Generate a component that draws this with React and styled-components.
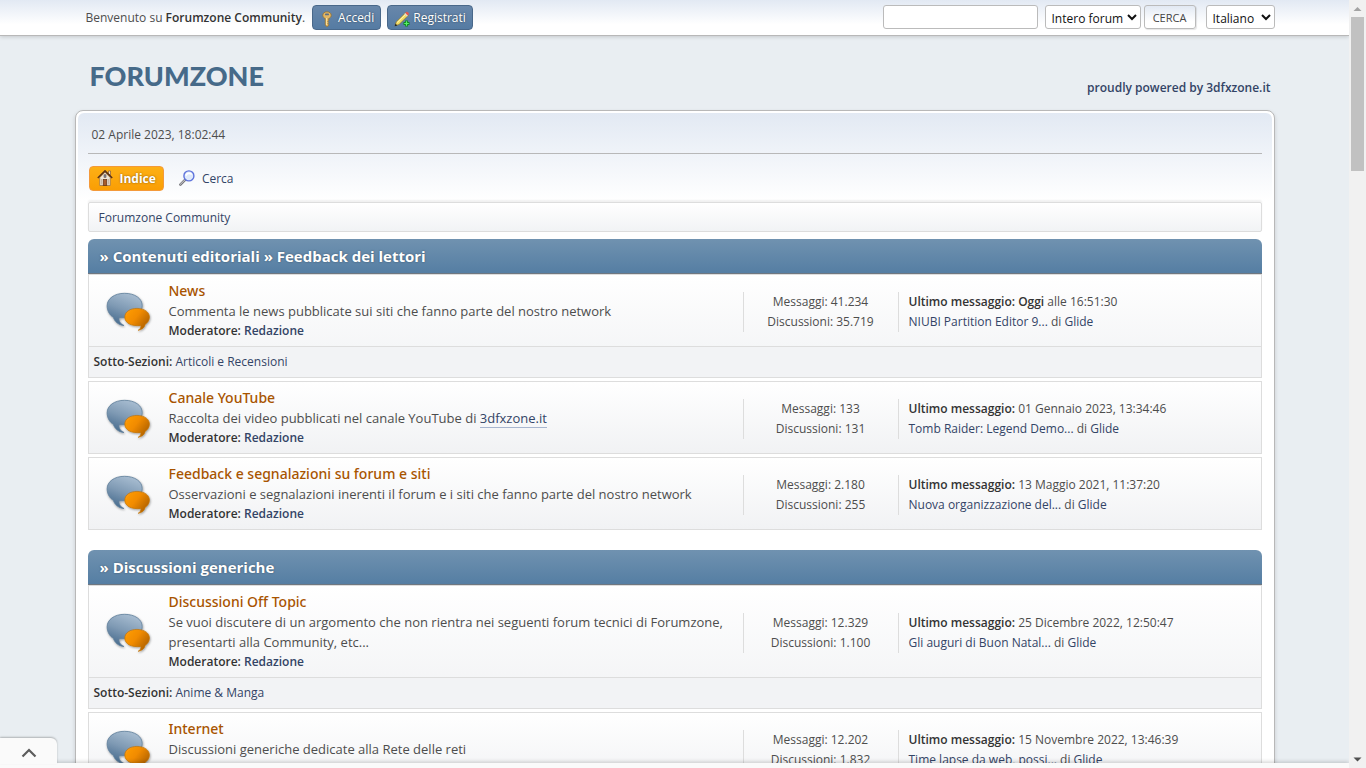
import React, { useState } from "react";
import styled, { createGlobalStyle, css } from "styled-components";

const categories = [
  {
    id: 1,
    title: "» Contenuti editoriali » Feedback dei lettori",
    boards: [
      {
        name: "News",
        text: "Commenta le news pubblicate sui siti che fanno parte del nostro network",
        posts: "41.234",
        topics: "35.719",
        today: true,
        date: "alle 16:51:30",
        last: "NIUBI Partition Editor 9...",
        child: "Articoli e Recensioni",
      },
      {
        name: "Canale YouTube",
        text: "Raccolta dei video pubblicati nel canale YouTube di ",
        site: "3dfxzone.it",
        posts: "133",
        topics: "131",
        date: "01 Gennaio 2023, 13:34:46",
        last: "Tomb Raider: Legend Demo...",
      },
      {
        name: "Feedback e segnalazioni su forum e siti",
        text: "Osservazioni e segnalazioni inerenti il forum e i siti che fanno parte del nostro network",
        posts: "2.180",
        topics: "255",
        date: "13 Maggio 2021, 11:37:20",
        last: "Nuova organizzazione del...",
      },
    ],
  },
  {
    id: 2,
    title: "» Discussioni generiche",
    boards: [
      {
        name: "Discussioni Off Topic",
        text: "Se vuoi discutere di un argomento che non rientra nei seguenti forum tecnici di Forumzone, presentarti alla Community, etc...",
        posts: "12.329",
        topics: "1.100",
        date: "25 Dicembre 2022, 12:50:47",
        last: "Gli auguri di Buon Natal...",
        child: "Anime & Manga",
      },
      {
        name: "Internet",
        text: "Discussioni generiche dedicate alla Rete delle reti",
        posts: "12.202",
        topics: "1.832",
        date: "15 Novembre 2022, 13:46:39",
        last: "Time lapse da web, possi...",
      },
    ],
  },
];

const KeyIcon = () => (
  <svg width="16" height="16" viewBox="0 0 16 16">
    <path
      d="M8 .8C5.500.8 3.800 2.200 3.800 4.300c0 1.500 1 2.700 2.500 3.200v6.600L8 15.700l1.700-1.400v-1.200L8.900 12.300l.9-.9-.9-1 .8-.9v-2C11.200 7 12.200 5.800 12.200 4.300 12.200 2.200 10.500.8 8 .8Z"
      fill="#e2b765"
      stroke="#94702f"
      strokeWidth="0.800"
    />
    <rect x="6" y="2.500" width="4" height="1.800" rx="0.900" fill="#5b6f86" />
    <path d="M7.400 7v7" stroke="#fbe6a8" strokeWidth="0.900" />
  </svg>
);

const PencilIcon = () => (
  <svg width="16" height="16" viewBox="0 0 16 16">
    <path d="M1 14.800 2.200 11 11.500 1.800l2.700 2.700L5 13.500Z" fill="#f4dd62" stroke="#8a7430" strokeWidth="0.700" />
    <path d="M3.200 11.600 12 2.900" stroke="#fff7b8" strokeWidth="1" />
    <path d="m11 2.300 1.500-1.500c.8-.5 2.500 1 2.500 2.300L13.500 4.800Z" fill="#e2574f" />
    <path d="m10.300 3 .9-.9 2.600 2.600-.9.9Z" fill="#ddd" />
    <path d="m.7 15.200.8-2.600 1.800 1.800Z" fill="#222" />
    <path d="M12.500 9.500v6M9.500 12.500h6" stroke="#0f8a20" strokeWidth="2.800" />
    <path d="M12.500 10.200v4.600M10.200 12.500h4.600" stroke="#5cf06a" strokeWidth="1.200" />
  </svg>
);

const HomeIcon = () => (
  <svg width="16" height="16" viewBox="0 0 16 16">
    <path d="M11.500 1h2v4.500l-2-2Z" fill="#efe3d0" stroke="#7a4a25" strokeWidth="0.600" />
    <path d="M2.800 7.500 8 2.200l5.200 5.300v8H2.800Z" fill="#efe6da" stroke="#8b6a4c" strokeWidth="0.700" />
    <path d="M.8 8 8 .9 15.200 8" fill="none" stroke="#5a3219" strokeWidth="1.600" />
    <rect x="6.200" y="9.500" width="3.600" height="6" fill="#a65b2c" stroke="#5f2f12" strokeWidth="0.700" />
    <rect x="7" y="4.800" width="2" height="2.500" fill="#7b8ea8" stroke="#5a3219" strokeWidth="0.500" />
    <path d="M4.500 9v5.500M11.500 9v5.500" stroke="#c9b8a6" strokeWidth="1" />
  </svg>
);

const SearchIcon = () => (
  <svg width="16" height="16" viewBox="0 0 16 16">
    <path d="M6.300 9.700 1.400 14.600" stroke="#77777c" strokeWidth="2.600" strokeLinecap="round" />
    <path d="M6 9.800 1.400 14.300" stroke="#cfcfd4" strokeWidth="1" strokeLinecap="round" />
    <circle cx="9.900" cy="5.900" r="5" fill="#dfeafb" stroke="#5f74dc" strokeWidth="1.400" />
    <path d="M6.800 5.600c1-2.500 4.500-3 6-1" fill="none" stroke="#fff" strokeWidth="1.600" />
  </svg>
);

const BoardIcon = () => (
  <svg width="50" height="44" viewBox="0 0 50 44">
    <defs>
      <linearGradient id="blueBubble" x1="0.700" y1="0" x2="0.300" y2="1">
        <stop offset="0" stopColor="#a9bed2" />
        <stop offset="0.500" stopColor="#7f9ab4" />
        <stop offset="1" stopColor="#456a8d" />
      </linearGradient>
      <linearGradient id="orangeBubble" x1="0" y1="0.100" x2="1" y2="0.800">
        <stop offset="0" stopColor="#ff9d0a" />
        <stop offset="0.450" stopColor="#f18b00" />
        <stop offset="1" stopColor="#a85c00" />
      </linearGradient>
      <filter id="bubbleShadow" x="-20%" y="-20%" width="140%" height="150%">
        <feDropShadow dx="0.600" dy="1" stdDeviation="0.900" floodOpacity="0.400" />
      </filter>
    </defs>
    <g filter="url(#bubbleShadow)">
      <path
        d="M20.500 3.300C31 3.300 38.200 8.500 38.200 15.500 38.200 23 31 28 15 27.800c-.5 3.200 1.500 6.200 5 7.700C14.500 35.200 10.500 31.500 9.300 27.300 5.300 25 3.100 20.500 3.100 15.800 3.100 8.500 10.500 3.300 20.500 3.300Z"
        fill="url(#blueBubble)"
        stroke="#607f9b"
        strokeWidth="0.800"
      />
      <path
        d="M33 18.400c7.200 0 12.400 3.500 12.400 8.600 0 3.300-1.700 5.700-4.200 7.200-.6 3-3 5.500-7 6.100 2.100-1.300 3-2.800 2.700-4.800C27 36.500 20.800 33 20.800 27c0-5.100 5-8.600 12.200-8.600Z"
        fill="url(#orangeBubble)"
        stroke="#c27208"
        strokeWidth="0.700"
      />
    </g>
  </svg>
);

const Board = ({ board }) => (
  <BoardBox>
    <BoardRow>
      <IconCell>
        <BoardIcon />
      </IconCell>
      <Info>
        <BoardName href="#">{board.name}</BoardName>
        <Description>
          {board.text}
          {board.site && <SiteLink href="#">{board.site}</SiteLink>}
        </Description>
        <Moderators>
          Moderatore: <Link href="#">Redazione</Link>
        </Moderators>
      </Info>
      <Stats>
        <p>Messaggi: {board.posts}</p>
        <p>Discussioni: {board.topics}</p>
      </Stats>
      <LastPost>
        <p>
          <strong>Ultimo messaggio: {board.today && "Oggi"}</strong>{" "}
          {board.date}
        </p>
        <p>
          <Link href="#">{board.last}</Link> di <Link href="#">Glide</Link>
        </p>
      </LastPost>
    </BoardRow>
    {board.child && (
      <Children>
        <strong>Sotto-Sezioni:</strong> <Link href="#">{board.child}</Link>
      </Children>
    )}
  </BoardBox>
);

const App = () => {
  const [search, setSearch] = useState("");

  return (
    <Window>
      <GlobalStyle />
      <Page>
        <TopSection>
          <TopInner>
            <Welcome>
              Benvenuto su <strong>Forumzone Community</strong>.
            </Welcome>
            <BlueButton>
              <KeyIcon />
              Accedi
            </BlueButton>
            <BlueButton>
              <PencilIcon />
              Registrati
            </BlueButton>
            <SearchForm onSubmit={(e) => e.preventDefault()}>
              <SearchInput
                type="search"
                aria-label="Cerca"
                value={search}
                onChange={(e) => setSearch(e.target.value)}
              />
              <Select $width="96px" aria-label="Dove cercare">
                <option>Intero forum</option>
              </Select>
              <SearchButton type="submit">CERCA</SearchButton>
            </SearchForm>
            <Select $width="69px" aria-label="Lingua">
              <option>Italiano</option>
            </Select>
          </TopInner>
        </TopSection>

        <Header>
          <Logo>FORUMZONE</Logo>
          <Slogan>proudly powered by 3dfxzone.it</Slogan>
        </Header>

        <Wrapper>
          <Content>
            <DateLine>02 Aprile 2023, 18:02:44</DateLine>
            <Menu>
              <MenuLink href="#" $active>
                <HomeIcon />
                Indice
              </MenuLink>
              <MenuLink href="#">
                <SearchIcon />
                Cerca
              </MenuLink>
            </Menu>
            <NavPath>
              <Link href="#">Forumzone Community</Link>
            </NavPath>
            {categories.map((category) => (
              <Category key={category.id}>
                <CategoryTitle>{category.title}</CategoryTitle>
                <BoardList>
                  {category.boards.map((board) => (
                    <Board key={board.name} board={board} />
                  ))}
                </BoardList>
              </Category>
            ))}
          </Content>
        </Wrapper>

        <BottomBar>
          <BottomTab aria-label="Apri">
            <svg width="16" height="10" viewBox="0 0 16 10">
              <path d="m1.500 8.500 6.500-6.500 6.500 6.500" fill="none" stroke="#5c5c5c" strokeWidth="2.200" />
            </svg>
          </BottomTab>
        </BottomBar>
      </Page>

      <ScrollTrack>
        <svg width="17" height="17" viewBox="0 0 17 17">
          <path d="M4.500 11 8.500 7l4 4Z" fill="#a3a3a3" />
        </svg>
        <ScrollThumb />
        <svg width="17" height="17" viewBox="0 0 17 17">
          <path d="M4.500 6.500h8l-4 4Z" fill="#505050" />
        </svg>
      </ScrollTrack>
    </Window>
  );
};

export default App;

const GlobalStyle = createGlobalStyle`
  * {
    box-sizing: border-box;
  }
  body {
    margin: 0;
    background: #e9eef2;
    color: #4d4d4d;
    font-family: "Open Sans", "Noto Sans", sans-serif;
    font-size: 12px;
    line-height: 20px;
  }
  p, h1, h2, h3 {
    margin: 0;
  }
  strong {
    font-weight: 600;
    color: #333;
  }
  button, input, select {
    font-family: inherit;
    font-size: 12px;
  }
`;
const Window = styled.div`
  display: flex;
  height: 100vh;
  overflow: hidden;
`;
const Page = styled.div`
  position: relative;
  flex: 1;
  min-width: 0;
  overflow: hidden;
`;
const TopSection = styled.div`
  height: 36px;
  border-bottom: 1px solid #b8b8b8;
  background: linear-gradient(#e2e9f3 0%, #fff 70%);
  box-shadow: 0 1px 4px rgba(0, 0, 0, 0.16);
`;
const TopInner = styled.div`
  display: flex;
  align-items: flex-start;
  max-width: 1200px;
  margin: 0 auto;
  padding: 5px 0 0 11px;
`;
const Welcome = styled.p`
  margin-right: 7px;
  line-height: 26px;
`;
const BlueButton = styled.button`
  display: flex;
  align-items: center;
  gap: 3px;
  height: 25px;
  margin-right: 6px;
  padding: 0 6px;
  border: 1px solid #49688a;
  border-radius: 4px;
  background: linear-gradient(#6887aa, #557ba3);
  color: #fff;
  text-shadow: 0 0 2px rgba(0, 0, 0, 0.5);
  svg {
    margin-top: 2px;
  }
`;
const SearchForm = styled.form`
  display: flex;
  align-items: flex-start;
  margin: 0 10px 0 auto;
`;
const field = css`
  height: 24px;
  border: 1px solid #bbb;
  border-radius: 3px;
  background: #fff;
`;
const SearchInput = styled.input`
  ${field}
  width: 155px;
  margin-right: 7px;
  padding: 0 6px;
`;
const Select = styled.select`
  ${field}
  width: ${({ $width }) => $width};
  padding: 2px 0 0 2px;
  color: #111;
`;
const SearchButton = styled.button`
  ${field}
  width: 52px;
  margin-left: 3px;
  padding: 0;
  background: linear-gradient(#e2e9f3, #fff 70%);
  box-shadow: 1px 1px 1px rgba(0, 0, 0, 0.1);
  color: #444;
  font-size: 11px;
`;
const Header = styled.header`
  display: flex;
  justify-content: space-between;
  max-width: 1200px;
  height: 74px;
  margin: 0 auto;
  padding: 20px 4px 0 15px;
`;
const Logo = styled.h1`
  color: #466a89;
  font-family: Lato, sans-serif;
  font-size: 27px;
  font-weight: 900;
  line-height: 40px;
`;
const Slogan = styled.p`
  margin-top: 22px;
  color: #346;
  font-weight: 600;
`;
const Wrapper = styled.main`
  max-width: 1200px;
  margin: 0 auto;
  padding: 2px;
  border: 1px solid #b8b8b8;
  border-radius: 8px;
  background: #fff;
  box-shadow: 0 2px 4px rgba(0, 0, 0, 0.14);
`;
const Content = styled.div`
  padding: 0 10px;
  border-radius: 6px;
  background: linear-gradient(#e2e9f3, #fff 88px);
`;
const DateLine = styled.p`
  height: 41px;
  padding: 12px 4px 0;
  border-bottom: 1px solid #b8b8b8;
`;
const Menu = styled.nav`
  display: flex;
  gap: 7px;
  padding: 12px 1px 11px;
`;
const Link = styled.a`
  color: #346;
  text-decoration: none;
`;
const MenuLink = styled(Link)`
  display: flex;
  align-items: center;
  gap: 7px;
  height: 25px;
  padding: 0 7px;
  border: 1px solid transparent;
  border-radius: 4px;
  svg {
    margin-bottom: 2px;
  }
  ${({ $active }) =>
    $active &&
    css`
      border-color: #f49a3a;
      background: linear-gradient(#fdb015, #fa9e04);
      color: #fff;
      font-weight: 700;
      text-shadow: 0 0 2px rgba(0, 0, 0, 0.5);
    `}
`;
const NavPath = styled.div`
  height: 30px;
  margin-bottom: 7px;
  padding: 5px 10px;
  border: 1px solid #ddd;
  border-radius: 2px;
  background: linear-gradient(#fff, #f1f3f5);
  box-shadow: 0 -2px 2px rgba(0, 0, 0, 0.06);
`;
const Category = styled.section`
  margin-bottom: 20px;
`;
const CategoryTitle = styled.h2`
  height: 35px;
  padding: 0 12px;
  border-bottom: 1px solid #6f7780;
  border-radius: 6px 6px 0 0;
  background: linear-gradient(#7092b0, #557ea3);
  color: #fff;
  font-size: 15px;
  font-weight: 700;
  line-height: 35px;
  text-shadow: 0 0 2px rgba(0, 0, 0, 0.4);
`;
const BoardList = styled.div`
  display: flex;
  flex-direction: column;
  gap: 3px;
`;
const BoardBox = styled.article`
  border: 1px solid #ddd;
  background: linear-gradient(#fff, #f1f2f4);
`;
const BoardRow = styled.div`
  display: grid;
  grid-template-columns: 80px 1fr 155px 363px;
  align-items: center;
  padding: 6px 0 5px;
`;
const IconCell = styled.div`
  display: flex;
  padding: 2px 0 0 15px;
`;
const Info = styled.div`
  padding-right: 12px;
  font-size: 13px;
`;
const BoardName = styled(Link)`
  display: block;
  color: #a85400;
  font-family: "Noto Sans", "Open Sans", sans-serif;
  font-size: 14px;
  font-weight: 500;
  line-height: 20px;
`;
const Description = styled.p`
  color: #4d4d4d;
`;
const SiteLink = styled(Link)`
  border-bottom: 1px solid #a8b6cf;
`;
const Moderators = styled.p`
  color: #333;
  font-size: 12px;
  font-weight: 600;
  line-height: 20px;
`;
const Stats = styled.div`
  margin-top: 2px;
  border-left: 1px solid #ddd;
  text-align: center;
`;
const LastPost = styled.div`
  margin-top: 2px;
  padding-left: 10px;
  border-left: 1px solid #ddd;
`;
const Children = styled.div`
  height: 31px;
  padding: 5px;
  border-top: 1px solid #ddd;
  background: #f2f3f5;
`;
const BottomBar = styled.div`
  position: absolute;
  right: 0;
  bottom: 0;
  left: 0;
  height: 5px;
  background: #fafafa;
  box-shadow: 0 -1px 4px rgba(0, 0, 0, 0.2);
`;
const BottomTab = styled.button`
  position: absolute;
  bottom: 4px;
  left: 0;
  display: flex;
  align-items: center;
  justify-content: center;
  width: 57px;
  height: 26px;
  padding: 4px 0 0;
  border: none;
  border-radius: 0 6px 0 0;
  background: #fafafa;
  box-shadow: 0 -1px 2px rgba(0, 0, 0, 0.25);
`;
const ScrollTrack = styled.div`
  display: flex;
  flex-direction: column;
  align-items: center;
  width: 17px;
  background: #f1f1f1;
  svg:last-child {
    margin-top: auto;
  }
`;
const ScrollThumb = styled.div`
  width: 13px;
  height: 20%;
  background: #c1c1c1;
`;
